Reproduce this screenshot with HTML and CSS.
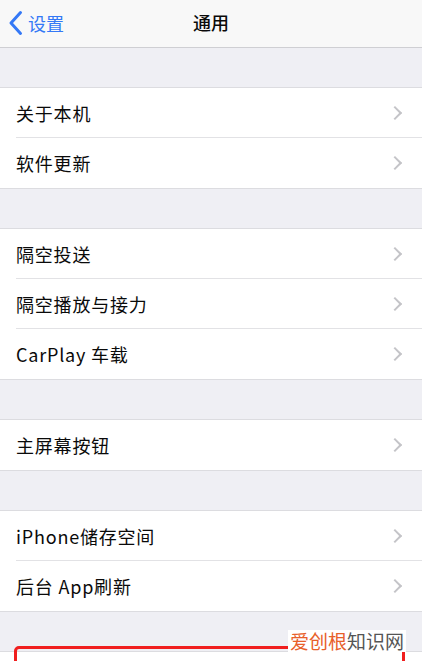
FILE: index.html
```html
<!DOCTYPE html>
<html lang="zh-CN">
<head>
    <meta charset="UTF-8">
    <meta name="viewport" content="width=device-width, initial-scale=1.0">
    <title>通用</title>
    <link rel="stylesheet" href="styles.css">
</head>
<body>
    <div class="navbar">
        <a href="#" class="back">
            <svg width="15" height="26" viewBox="0 0 15 26"><path d="M12.5 2.5 L3 13 L12.5 23.5" fill="none" stroke="#3478f6" stroke-width="3" stroke-linecap="round" stroke-linejoin="round"/></svg>
            <span>设置</span>
        </a>
        <div class="title">通用</div>
    </div>

    <div class="group">
        <div class="row"><div class="row-inner"><span>关于本机</span><i class="chev"></i></div></div>
        <div class="row"><div class="row-inner"><span>软件更新</span><i class="chev"></i></div></div>
    </div>

    <div class="group">
        <div class="row"><div class="row-inner"><span>隔空投送</span><i class="chev"></i></div></div>
        <div class="row"><div class="row-inner"><span>隔空播放与接力</span><i class="chev"></i></div></div>
        <div class="row"><div class="row-inner"><span>CarPlay 车载</span><i class="chev"></i></div></div>
    </div>

    <div class="group">
        <div class="row"><div class="row-inner"><span>主屏幕按钮</span><i class="chev"></i></div></div>
    </div>

    <div class="group">
        <div class="row"><div class="row-inner"><span>iPhone储存空间</span><i class="chev"></i></div></div>
        <div class="row"><div class="row-inner"><span>后台 App刷新</span><i class="chev"></i></div></div>
    </div>

    <div class="group last">
        <div class="highlight"></div>
        <div class="watermark"><em>爱创根</em>知识网</div>
        <div class="row"><div class="row-inner"><span></span><i class="chev"></i></div></div>
    </div>
</body>
</html>
```

FILE: styles.css
```css
body {
    margin: 0;
    background: #efeff4;
    font-family: "Noto Sans CJK SC", "Noto Sans", sans-serif;
    color: #0a0a0a;
    overflow: hidden;
}
.navbar {
    height: 47px;
    background: #f8f8f8;
    border-bottom: 1px solid #cfcfd3;
    display: flex;
    align-items: center;
    justify-content: center;
    position: relative;
}
.back {
    position: absolute;
    left: 8px;
    top: 10px;
    display: flex;
    align-items: center;
    gap: 5px;
    color: #3478f6;
    text-decoration: none;
    font-size: 18px;
}
.title {
    font-size: 18px;
    font-weight: 500;
    margin-top: -3px;
}
.group {
    margin-top: 39px;
    background: #fff;
    border-top: 1px solid #dcdce0;
    border-bottom: 1px solid #dcdce0;
}
.row {
    padding-left: 16px;
}
.row-inner {
    height: 49px;
    display: flex;
    align-items: center;
    justify-content: space-between;
    border-bottom: 1px solid #e2e2e5;
    padding-right: 20px;
    font-size: 18px;
    letter-spacing: 0.8px;
}
.row:last-child .row-inner {
    height: 50px;
    border-bottom: none;
}
.chev {
    width: 8px;
    height: 8px;
    border-right: 2px solid #c4c4c8;
    border-bottom: 2px solid #c4c4c8;
    transform: rotate(-45deg);
    margin-right: 2px;
}
.last {
    position: relative;
}
.highlight {
    position: absolute;
    left: 14px;
    right: 17px;
    top: -6px;
    height: 60px;
    border: 3px solid #f01e1e;
    border-radius: 5px;
}
.watermark {
    position: absolute;
    left: 288px;
    top: -22px;
    background: #fff;
    font-size: 19px;
    line-height: 22px;
    color: #555;
    padding: 0 2px;
}
.watermark em {
    font-style: normal;
    color: #e8602a;
}
```
